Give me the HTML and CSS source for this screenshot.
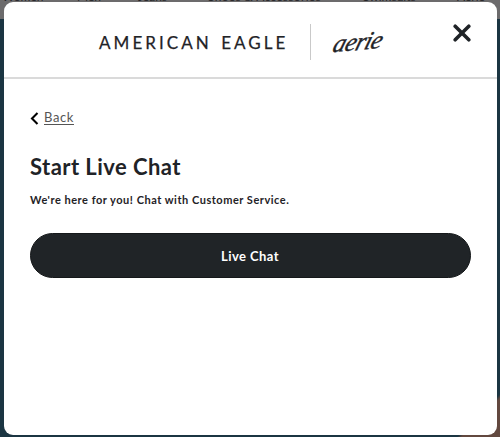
FILE: index.html
```html
<!DOCTYPE html>
<html lang="en">
<head>
    <meta charset="UTF-8">
    <meta name="viewport" content="width=device-width, initial-scale=1.0">
    <title>Start Live Chat</title>
    <link rel="stylesheet" href="styles.css">
</head>
<body>
    <div class="page">
        <nav class="site-nav">
            <span class="nav-women">Women</span>
            <span class="nav-men">Men</span>
            <span class="nav-jeans">Jeans</span>
            <span class="nav-shoes">Shoes &amp; Accessories</span>
            <span class="nav-swim">Swimsuits</span>
            <span class="nav-aerie">Aerie</span>
        </nav>
        <div class="hero"></div>
    </div>
    <div class="modal">
        <header class="modal-header">
            <span class="brand-ae">AMERICAN EAGLE</span>
            <span class="brand-divider"></span>
            <span class="brand-aerie">aerie</span>
            <button class="close-btn" aria-label="Close">
                <svg width="18" height="18" viewBox="0 0 18 18">
                    <path d="M2.2 2.2L15.8 15.8M15.8 2.2L2.2 15.8" fill="none" stroke="#1f2327" stroke-width="3.6" stroke-linecap="round"/>
                </svg>
            </button>
        </header>
        <main class="modal-body">
            <a class="back">
                <svg width="9" height="13" viewBox="0 0 9 13">
                    <path d="M7.5 1L2 6.5L7.5 12" fill="none" stroke="#000" stroke-width="2.1"/>
                </svg>
                <span class="back-text">Back</span>
            </a>
            <h1>Start Live Chat</h1>
            <p class="intro">We're here for you! Chat with Customer Service.</p>
            <button class="chat-btn">Live Chat</button>
        </main>
    </div>
</body>
</html>
```

FILE: styles.css
```css
* {
    box-sizing: border-box;
}
html, body {
    height: 100%;
}
body {
    margin: 0;
    padding: 2px 3px 2px 4px;
    overflow: hidden;
    font-family: Lato, 'Open Sans', sans-serif;
    color: #1f2327;
}
/* dimmed page behind the modal */
.page {
    position: absolute;
    inset: 0;
    z-index: -1;
    overflow: hidden;
    background: #6c6b6c;
}
.site-nav {
    position: relative;
    height: 19px;
    font-size: 12px;
    line-height: 14px;
    color: #252528;
}
.site-nav span {
    position: absolute;
    top: -10px;
    white-space: nowrap;
}
.nav-women { left: 2px; }
.nav-men { left: 77px; }
.nav-jeans { left: 138px; }
.nav-shoes { left: 208px; letter-spacing: 0.3px; }
.nav-swim { left: 363px; }
.nav-aerie { left: 457px; }
.hero {
    height: 418px;
    background: linear-gradient(135deg, transparent 95.3%, #62483f 95.8%), #1b3542;
}
.modal {
    height: 433px;
    background: #fff;
    border-radius: 9px;
    overflow: hidden;
}
.modal-header {
    position: relative;
    display: flex;
    align-items: center;
    height: 77px;
    padding: 5px 0 0 95px;
    border-bottom: 2px solid #dadada;
}
.brand-ae {
    width: 211px;
    font-size: 17px;
    letter-spacing: 3.05px;
    word-spacing: 2px;
    white-space: nowrap;
    -webkit-text-stroke: 0.25px #1f2327;
}
.brand-divider {
    width: 1px;
    height: 36px;
    background: #c9c9c9;
}
.brand-aerie {
    margin: 0 0 0 23px;
    font-family: 'Liberation Serif', serif;
    font-size: 25px;
    font-style: italic;
    letter-spacing: -0.6px;
    -webkit-text-stroke: 0.4px #1f2327;
    transform: rotate(-5deg) skewX(-22deg);
}
.close-btn {
    position: absolute;
    top: 22px;
    right: 26px;
    display: flex;
    padding: 0;
    border: 0;
    background: none;
    cursor: pointer;
}
.modal-body {
    padding: 29px 26px 0 26px;
}
.back {
    display: flex;
    align-items: center;
    gap: 5px;
    height: 20px;
    color: #555;
    cursor: pointer;
}
.back-text {
    margin-top: -2px;
    font-size: 13px;
    letter-spacing: 0.6px;
    text-decoration: underline;
    text-underline-offset: 2px;
}
h1 {
    margin: 24px 0 0;
    font-size: 22px;
    line-height: 30px;
    font-weight: 700;
    letter-spacing: 0.45px;
    white-space: nowrap;
}
.intro {
    margin: 9px 0 25px;
    font-size: 11px;
    line-height: 17px;
    font-weight: 700;
    letter-spacing: 0.52px;
    white-space: nowrap;
}
.chat-btn {
    display: block;
    width: 441px;
    height: 45px;
    padding: 0 1px 0 0;
    border: 1px solid #15181a;
    border-radius: 23px;
    background: #202427;
    color: #fff;
    font-family: inherit;
    font-size: 13px;
    font-weight: 700;
    letter-spacing: 0.45px;
    cursor: pointer;
}
```
